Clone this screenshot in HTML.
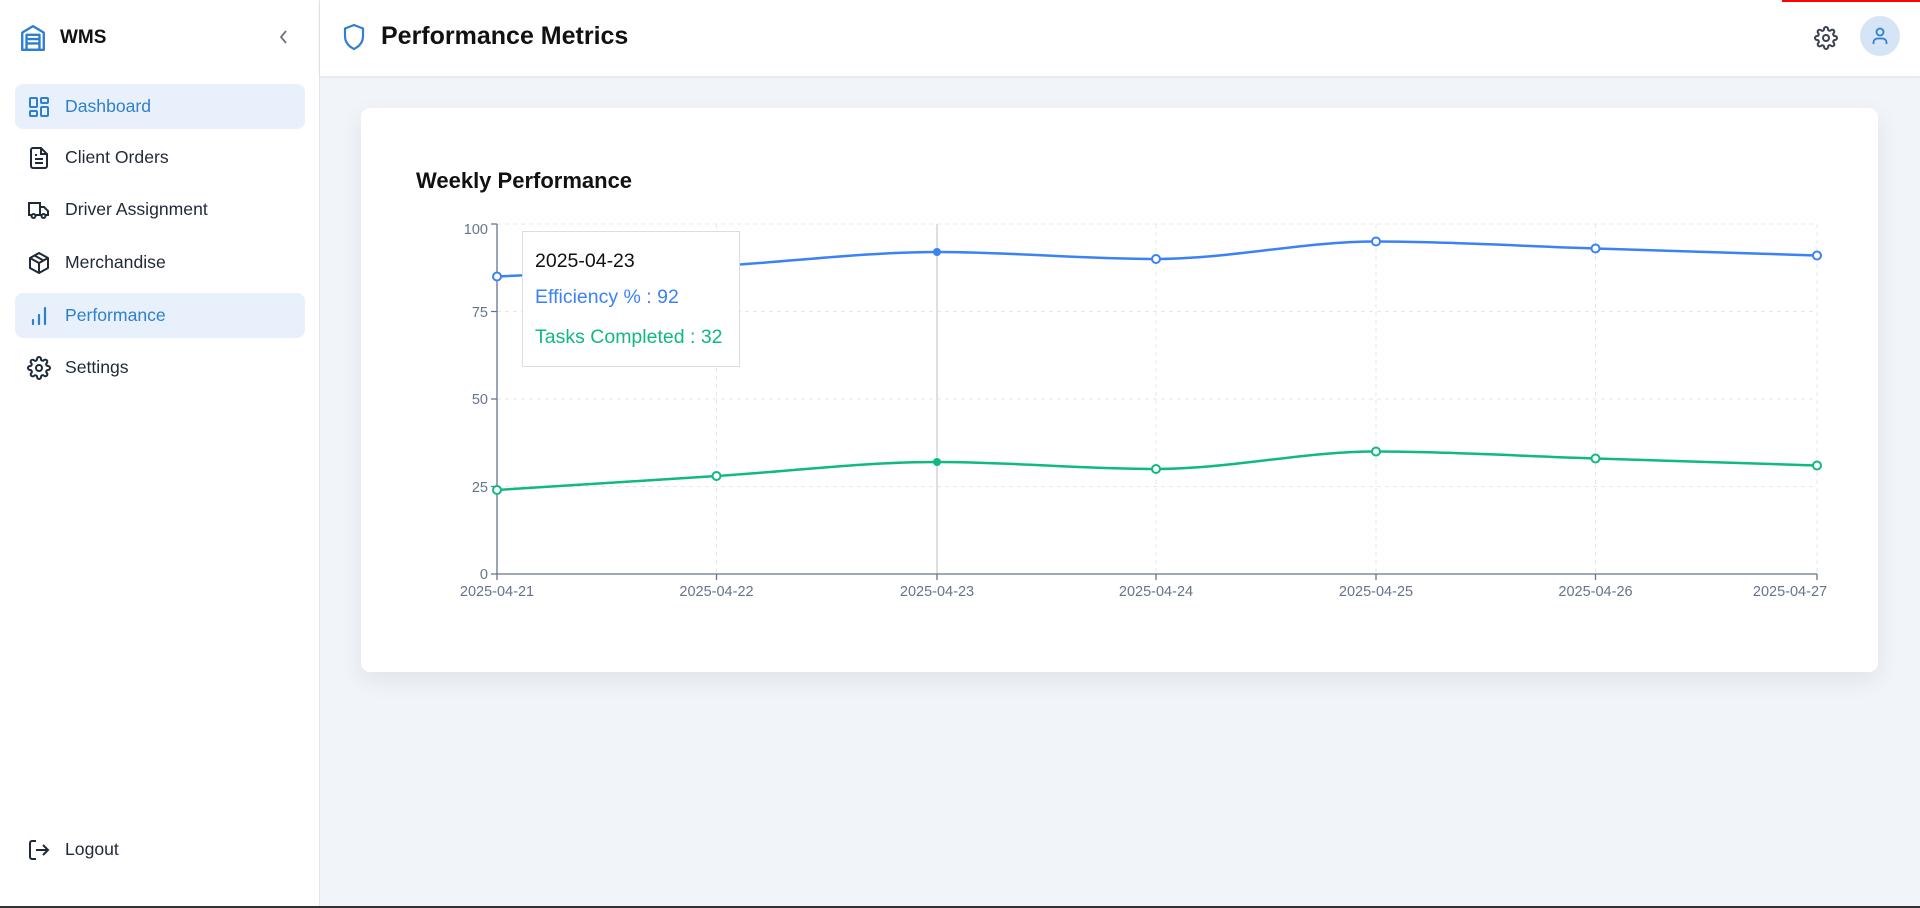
<!DOCTYPE html>
<html><head><meta charset="utf-8"><style>
*{box-sizing:border-box;margin:0;padding:0}
body{width:1920px;height:908px;overflow:hidden;font-family:"Liberation Sans",sans-serif;background:#f1f5f9;position:relative;color:#1f2937}
.sb{position:absolute;left:0;top:0;width:320px;height:908px;background:#fff;border-right:1px solid #e5e7eb}
.hd{position:absolute;left:320px;top:0;right:0;height:76px;background:#fff;box-shadow:0 1px 4px rgba(0,0,0,.08)}
.nav{position:absolute;left:15px;width:290px;height:45px;border-radius:8px;display:flex;align-items:center;font-size:17.6px;color:#1f2937}
.nav.a{background:#e8f1fb;color:#2f7fd0}
.nav svg{position:absolute;left:12px}
.nav span{position:absolute;left:50px}
.card{position:absolute;left:361px;top:108px;width:1517px;height:564px;background:#fff;border-radius:9px;box-shadow:0 8px 24px rgba(15,23,42,.08)}
.tt{position:absolute;left:522px;top:231px;width:218px;height:136px;background:#fff;border:1px solid #ddd;font-size:19.5px}
.tt div{position:absolute;left:12px}
</style></head><body>
<div class="sb">
<svg style="position:absolute;left:20px;top:24px" width="26" height="28" viewBox="0 0 24 26" fill="none" stroke="#2f7fd0" stroke-width="2.2" stroke-linejoin="round"><path d="M2 8 L12 2 L22 8 V24 H2 Z"/><rect x="6" y="10" width="12" height="14"/><path d="M6 14h12M6 18h12"/></svg>
<div style="position:absolute;left:60px;top:27px;font-weight:bold;font-size:19px;color:#111">WMS</div>
<svg style="position:absolute;left:278px;top:29px" width="12" height="16" viewBox="0 0 12 16" fill="none" stroke="#6b7280" stroke-width="1.8"><path d="M8 2 L3 8 L8 14"/></svg>
<div class="nav a" style="top:84px"><svg width="24" height="24" viewBox="0 0 24 24" fill="none" stroke="#2f7fd0" stroke-width="2"><rect x="3" y="3" width="7" height="9" rx="1"/><rect x="14" y="3" width="7" height="5" rx="1"/><rect x="14" y="12" width="7" height="9" rx="1"/><rect x="3" y="16" width="7" height="5" rx="1"/></svg><span>Dashboard</span></div>
<div class="nav" style="top:135px"><svg width="24" height="24" viewBox="0 0 24 24" fill="none" stroke="#1f2937" stroke-width="2"><path d="M14 2H6a2 2 0 0 0-2 2v16a2 2 0 0 0 2 2h12a2 2 0 0 0 2-2V8z"/><path d="M14 2v6h6M8 13h8M8 17h8M8 9h2"/></svg><span>Client Orders</span></div>
<div class="nav" style="top:187px"><svg width="24" height="24" viewBox="0 0 24 24" fill="none" stroke="#1f2937" stroke-width="2"><path d="M2 5h11v12H2zM13 9h4l4 4v4h-8z"/><circle cx="6.5" cy="18" r="2" fill="#fff"/><circle cx="16.5" cy="18" r="2" fill="#fff"/></svg><span>Driver Assignment</span></div>
<div class="nav" style="top:240px"><svg width="24" height="24" viewBox="0 0 24 24" fill="none" stroke="#1f2937" stroke-width="2" stroke-linejoin="round"><path d="M12 2 L21 7 V17 L12 22 L3 17 V7 Z"/><path d="M3 7 L12 12 L21 7M12 12v10M7.5 4.5l9 5"/></svg><span>Merchandise</span></div>
<div class="nav a" style="top:293px"><svg width="24" height="24" viewBox="0 0 24 24" fill="none" stroke="#2f7fd0" stroke-width="2.2" stroke-linecap="round"><path d="M6 20v-4M12 20v-9M18 20V4"/></svg><span>Performance</span></div>
<div class="nav" style="top:345px"><svg width="24" height="24" viewBox="0 0 24 24" fill="none" stroke="#1f2937" stroke-width="2"><circle cx="12" cy="12" r="3"/><path d="M19.4 15a1.65 1.65 0 0 0 .33 1.820l.06.06a2 2 0 1 1-2.83 2.83l-.06-.06a1.65 1.65 0 0 0-1.82-.33 1.65 1.65 0 0 0-1 1.51V21a2 2 0 0 1-4 0v-.09A1.65 1.65 0 0 0 9 19.4a1.65 1.65 0 0 0-1.82.33l-.06.06a2 2 0 1 1-2.83-2.83l.06-.06A1.65 1.65 0 0 0 4.68 15a1.65 1.65 0 0 0-1.51-1H3a2 2 0 0 1 0-4h.09A1.65 1.65 0 0 0 4.6 9a1.65 1.65 0 0 0-.33-1.82l-.06-.06a2 2 0 1 1 2.83-2.83l.06.06A1.65 1.65 0 0 0 9 4.68a1.65 1.65 0 0 0 1-1.51V3a2 2 0 0 1 4 0v.09a1.65 1.65 0 0 0 1 1.51 1.65 1.65 0 0 0 1.82-.33l.06-.06a2 2 0 1 1 2.83 2.83l-.06.06A1.65 1.65 0 0 0 19.4 9a1.65 1.65 0 0 0 1.51 1H21a2 2 0 0 1 0 4h-.09a1.65 1.65 0 0 0-1.51 1z"/></svg><span>Settings</span></div>
<div class="nav" style="top:827px"><svg width="24" height="24" viewBox="0 0 24 24" fill="none" stroke="#1f2937" stroke-width="2"><path d="M9 21H5a2 2 0 0 1-2-2V5a2 2 0 0 1 2-2h4M16 17l5-5-5-5M21 12H9"/></svg><span>Logout</span></div>
</div>
<div class="hd">
<svg style="position:absolute;left:22px;top:23px" width="24" height="28" viewBox="0 0 24 28" fill="none" stroke="#2f7fd0" stroke-width="2.2" stroke-linejoin="round"><path d="M12 2 L21 5.5 V13 C21 20 16 24 12 26 C8 24 3 20 3 13 V5.5 Z"/></svg>
<div style="position:absolute;left:61px;top:22px;font-weight:bold;font-size:25px;color:#111">Performance Metrics</div>
<svg style="position:absolute;left:1494px;top:26px" width="24" height="24" viewBox="0 0 24 24" fill="none" stroke="#374151" stroke-width="2"><circle cx="12" cy="12" r="3"/><path d="M19.4 15a1.65 1.65 0 0 0 .33 1.82l.06.06a2 2 0 1 1-2.83 2.83l-.06-.06a1.65 1.65 0 0 0-1.82-.33 1.65 1.65 0 0 0-1 1.51V21a2 2 0 0 1-4 0v-.09A1.65 1.65 0 0 0 9 19.4a1.65 1.65 0 0 0-1.82.33l-.06.06a2 2 0 1 1-2.83-2.83l.06-.06A1.65 1.65 0 0 0 4.68 15a1.65 1.65 0 0 0-1.51-1H3a2 2 0 0 1 0-4h.09A1.65 1.65 0 0 0 4.6 9a1.65 1.65 0 0 0-.33-1.82l-.06-.06a2 2 0 1 1 2.83-2.83l.06.06A1.65 1.65 0 0 0 9 4.68a1.65 1.65 0 0 0 1-1.51V3a2 2 0 0 1 4 0v.09a1.65 1.65 0 0 0 1 1.51 1.65 1.65 0 0 0 1.82-.33l.06-.06a2 2 0 1 1 2.83 2.83l-.06.06A1.65 1.65 0 0 0 19.4 9a1.65 1.65 0 0 0 1.51 1H21a2 2 0 0 1 0 4h-.09a1.65 1.65 0 0 0-1.51 1z"/></svg>
<div style="position:absolute;left:1540px;top:16px;width:40px;height:40px;border-radius:50%;background:#d6e5f5"></div>
<svg style="position:absolute;left:1550px;top:26px" width="20" height="20" viewBox="0 0 20 20" fill="none" stroke="#2f7fd0" stroke-width="1.8"><circle cx="10" cy="6" r="3.5"/><path d="M3.5 18v-1.5a4 4 0 0 1 4-4h5a4 4 0 0 1 4 4V18"/></svg>
</div>
<div style="position:absolute;left:1782px;top:0;width:138px;height:2px;background:#f00"></div>
<div class="card"></div>
<div style="position:absolute;left:416px;top:168px;font-weight:bold;font-size:22px;color:#111">Weekly Performance</div>
<svg style="position:absolute;left:0;top:0" width="1920" height="908" font-family="Liberation Sans, sans-serif" font-size="14.5">
<g stroke="#e5e7eb" stroke-dasharray="4 4" stroke-width="1" fill="none">
<path d="M497 224H1817M497 311.5H1817M497 399H1817M497 486.5H1817"/>
<path d="M716.5 224V574M1156 224V574M1376 224V574M1595.5 224V574M1817 224V574"/>
</g>
<line x1="937" y1="224" x2="937" y2="574" stroke="#ccc" stroke-width="1.3"/>
<g stroke="#64748b" stroke-width="1.3" fill="none"><path d="M497 224V574H1817"/><path d="M491 224H497M491 311.5H497M491 399H497M491 486.5H497M491 574H497"/><path d="M497 574v6M716.5 574v6M937 574v6M1156 574v6M1376 574v6M1595.5 574v6M1817 574v6"/></g>
<g text-anchor="end" fill="#64748b"><text x="488" y="234">100</text><text x="488" y="317">75</text><text x="488" y="404">50</text><text x="488" y="492">25</text><text x="488" y="579">0</text></g>
<g text-anchor="middle" fill="#64748b"><text x="497" y="596">2025-04-21</text><text x="716.5" y="596">2025-04-22</text><text x="937" y="596">2025-04-23</text><text x="1156" y="596">2025-04-24</text><text x="1376" y="596">2025-04-25</text><text x="1595.5" y="596">2025-04-26</text><text x="1790" y="596">2025-04-27</text></g>
<path fill="none" stroke="#3b82f6" stroke-width="2.5" d="M497,276.5 C570.3,273 643.2,270.1 716.5,266 C789.8,261.9 863.7,252 937,252 C1010,252 1083,259 1156,259 C1229,259 1303,241.5 1376,241.5 C1449,241.5 1522,246.2 1595.5,248.5 C1669,250.8 1743,253.2 1817,255.5"/>
<path fill="none" stroke="#10b981" stroke-width="2.5" d="M497,490 C570.3,485.3 643.2,480.7 716.5,476 C789.8,471.3 863.7,462 937,462 C1010,462 1083,469 1156,469 C1229,469 1303,451.5 1376,451.5 C1449,451.5 1522,456.2 1595.5,458.5 C1669,460.8 1743,463.2 1817,465.5"/>
<g fill="#fff" stroke="#3b82f6" stroke-width="2"><circle cx="497" cy="276.5" r="4"/><circle cx="1156" cy="259" r="4"/><circle cx="1376" cy="241.5" r="4"/><circle cx="1595.5" cy="248.5" r="4"/><circle cx="1817" cy="255.5" r="4"/></g>
<circle cx="937" cy="252" r="4" fill="#3b82f6"/>
<g fill="#fff" stroke="#10b981" stroke-width="2"><circle cx="497" cy="490" r="4"/><circle cx="716.5" cy="476" r="4"/><circle cx="1156" cy="469" r="4"/><circle cx="1376" cy="451.5" r="4"/><circle cx="1595.5" cy="458.5" r="4"/><circle cx="1817" cy="465.5" r="4"/></g>
<circle cx="937" cy="462" r="4" fill="#10b981"/>
</svg>
<div class="tt"><div style="top:18px;color:#111">2025-04-23</div><div style="top:54px;color:#3b82f6">Efficiency % : 92</div><div style="top:94px;color:#10b981">Tasks Completed : 32</div></div>
<div style="position:absolute;left:0;bottom:0;width:1920px;height:2px;background:#333"></div>
</body></html>
